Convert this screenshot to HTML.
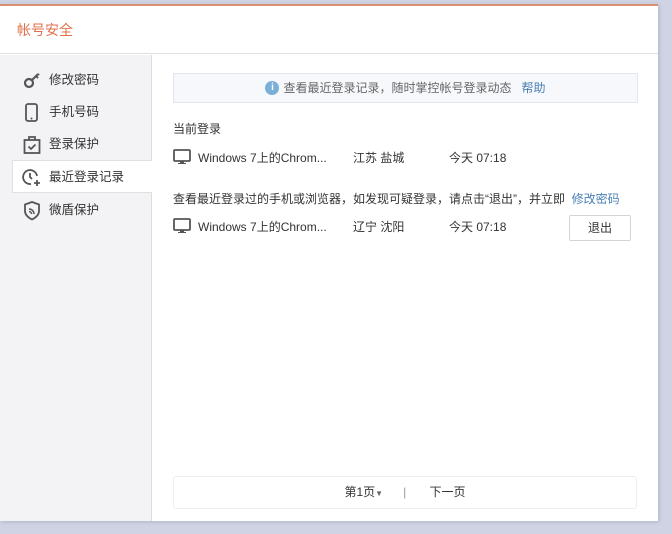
<!DOCTYPE html>
<html><head><meta charset="utf-8"><style>
*{margin:0;padding:0;box-sizing:border-box}
body{width:672px;height:534px;background:#cfd3e4;font-family:"Liberation Sans","Noto Sans CJK SC",sans-serif;font-size:12px;line-height:16px;color:#333;position:relative;overflow:hidden}
.win{position:absolute;left:0;top:4px;width:658px;height:517px;background:#fff;border-top:2px solid #d9906e;box-shadow:1px 1px 4px rgba(0,0,0,.15)}
.hd{height:48px;border-bottom:1px solid #e0e0e0;color:#e0704a;font-size:14px;padding:16px 0 0 17px}
.side{position:absolute;left:0;top:49px;width:152px;bottom:0;background:#f3f3f5;border-right:1px solid #ddd}
.it{position:absolute;left:0;height:33px;width:151px;padding:8px 0 0 49px;font-size:12.5px;color:#333}
.it.on{left:12px;width:140px;background:#fff;border:1px solid #e0e0e0;border-right:none;padding-left:36px}
.it svg{position:absolute;left:23px;top:7px}
.it.on svg{left:9px}
.main{position:absolute;left:152px;top:49px;right:0;bottom:0}
.tip{position:absolute;left:21px;top:18px;width:465px;height:30px;background:#f6f8fb;border:1px solid #e3e6ec;text-align:center;line-height:28px;color:#666}
.tip .i{display:inline-block;width:14px;height:14px;border-radius:50%;background:#7ab0d8;color:#fff;font-size:10px;line-height:14px;font-weight:bold;vertical-align:middle;margin-right:4px;position:relative;top:-1px}
a{color:#4a7fb5;text-decoration:none}
.t{position:absolute;left:21px;white-space:nowrap}
.row{position:absolute;left:21px;width:470px;height:20px}
.row svg{position:absolute;left:0;top:1px}
.row span{position:absolute;top:3px}
.btn{position:absolute;left:417px;top:160px;width:62px;height:26px;border:1px solid #d5d5d5;border-radius:2px;text-align:center;line-height:24px;background:#fff}
.pg{position:absolute;left:21px;top:421px;width:464px;height:33px;border:1px solid #eee;border-radius:3px;text-align:center;line-height:31px;color:#333}
</style></head><body>
<div class="win">
<div class="hd">帐号安全</div>
<div class="side">
<div class="it" style="top:9px"><svg width="18" height="18" viewBox="0 0 18 18"><circle cx="6" cy="12" r="4" fill="none" stroke="#555" stroke-width="2.2"/><path d="M9 9 L15 3 M13 5 L15 7 M15 3l1 1" stroke="#555" stroke-width="2" fill="none"/></svg>修改密码</div>
<div class="it" style="top:41px"><svg width="18" height="20" viewBox="0 0 18 20"><rect x="3" y="1" width="11" height="17" rx="2" fill="none" stroke="#555" stroke-width="1.8"/><circle cx="8.5" cy="15.5" r="1" fill="#555"/></svg>手机号码</div>
<div class="it" style="top:73px"><svg width="18" height="20" viewBox="0 0 18 20"><rect x="1.5" y="5" width="15" height="13" fill="none" stroke="#555" stroke-width="1.8"/><path d="M6 5V2h6v3M5.5 11.5l2.5 2.5 4.5-4.5" stroke="#555" stroke-width="1.8" fill="none"/></svg>登录保护</div>
<div class="it on" style="top:105px"><svg width="20" height="20" viewBox="0 0 20 20"><path d="M15 8A7 7 0 1 0 9 16" fill="none" stroke="#555" stroke-width="1.8"/><path d="M8 5v4l2 2M15 12v6M12 15h6" stroke="#555" stroke-width="1.8" fill="none"/></svg>最近登录记录</div>
<div class="it" style="top:139px"><svg width="18" height="20" viewBox="0 0 18 20"><path d="M9 1L2 3.5V10c0 4 3 6.5 7 8.5 4-2 7-4.5 7-8.5V3.5z" fill="none" stroke="#555" stroke-width="1.8"/><path d="M6 8a5 5 0 0 1 5 5M6 10.5a2.5 2.5 0 0 1 2.5 2.5" stroke="#555" stroke-width="1.5" fill="none"/></svg>微盾保护</div>
</div>
<div class="main">
<div class="tip"><span class="i">i</span>查看最近登录记录，随时掌控帐号登录动态&nbsp;&nbsp;&nbsp;<a>帮助</a></div>
<div class="t" style="top:66px">当前登录</div>
<div class="row" style="top:92px"><svg width="18" height="18" viewBox="0 0 18 18"><rect x="1" y="2" width="16" height="11" rx="1" fill="none" stroke="#555" stroke-width="1.8"/><path d="M7 13v2H5v1h8v-1h-2v-2" fill="#555"/></svg><span style="left:25px">Windows 7上的Chrom...</span><span style="left:180px">江苏 盐城</span><span style="left:276px">今天 07:18</span></div>
<div class="t" style="top:136px">查看最近登录过的手机或浏览器，如发现可疑登录，请点击“退出”，并立即&nbsp;&nbsp;<a>修改密码</a></div>
<div class="row" style="top:161px"><svg width="18" height="18" viewBox="0 0 18 18"><rect x="1" y="2" width="16" height="11" rx="1" fill="none" stroke="#555" stroke-width="1.8"/><path d="M7 13v2H5v1h8v-1h-2v-2" fill="#555"/></svg><span style="left:25px">Windows 7上的Chrom...</span><span style="left:180px">辽宁 沈阳</span><span style="left:276px">今天 07:18</span></div>
<div class="btn">退出</div>
<div class="pg">第1页<span style="font-size:8px;color:#666">▼</span>&nbsp;&nbsp;&nbsp;&nbsp;&nbsp;&nbsp;<span style="color:#999">|</span>&nbsp;&nbsp;&nbsp;&nbsp;&nbsp;&nbsp;&nbsp;下一页</div>
</div>
</div>
</body></html>
